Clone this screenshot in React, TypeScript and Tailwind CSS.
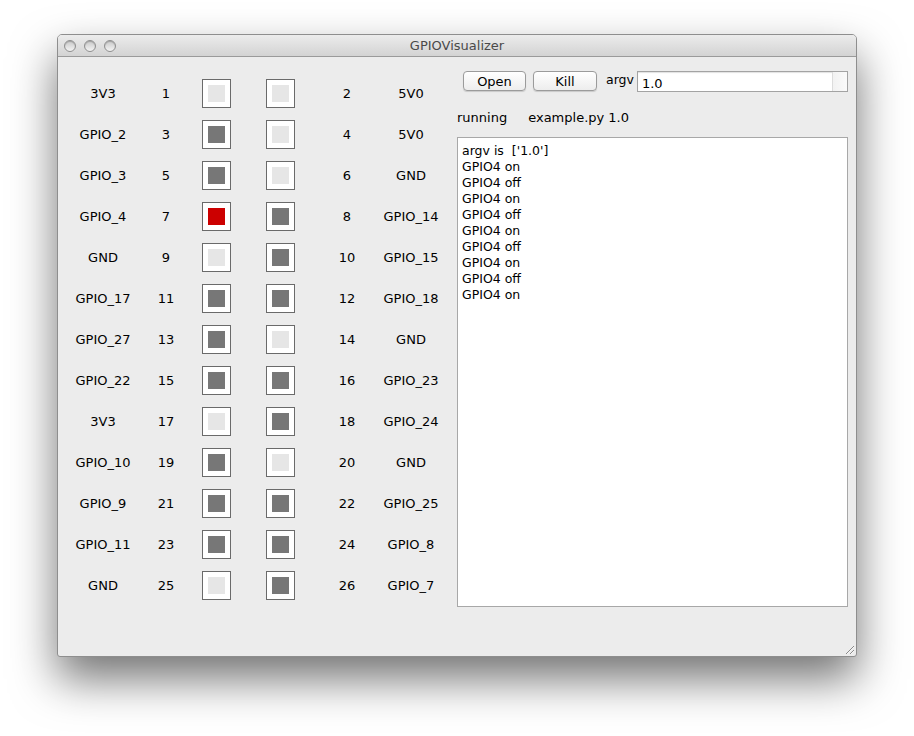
import React from 'react';

type PinState = 'off' | 'on' | 'hot';

interface PinRow {
  leftName: string;
  leftNum: number;
  leftState: PinState;
  rightState: PinState;
  rightNum: number;
  rightName: string;
}

const pins: PinRow[] = [
  { leftName: '3V3', leftNum: 1, leftState: 'off', rightState: 'off', rightNum: 2, rightName: '5V0' },
  { leftName: 'GPIO_2', leftNum: 3, leftState: 'on', rightState: 'off', rightNum: 4, rightName: '5V0' },
  { leftName: 'GPIO_3', leftNum: 5, leftState: 'on', rightState: 'off', rightNum: 6, rightName: 'GND' },
  { leftName: 'GPIO_4', leftNum: 7, leftState: 'hot', rightState: 'on', rightNum: 8, rightName: 'GPIO_14' },
  { leftName: 'GND', leftNum: 9, leftState: 'off', rightState: 'on', rightNum: 10, rightName: 'GPIO_15' },
  { leftName: 'GPIO_17', leftNum: 11, leftState: 'on', rightState: 'on', rightNum: 12, rightName: 'GPIO_18' },
  { leftName: 'GPIO_27', leftNum: 13, leftState: 'on', rightState: 'off', rightNum: 14, rightName: 'GND' },
  { leftName: 'GPIO_22', leftNum: 15, leftState: 'on', rightState: 'on', rightNum: 16, rightName: 'GPIO_23' },
  { leftName: '3V3', leftNum: 17, leftState: 'off', rightState: 'on', rightNum: 18, rightName: 'GPIO_24' },
  { leftName: 'GPIO_10', leftNum: 19, leftState: 'on', rightState: 'off', rightNum: 20, rightName: 'GND' },
  { leftName: 'GPIO_9', leftNum: 21, leftState: 'on', rightState: 'on', rightNum: 22, rightName: 'GPIO_25' },
  { leftName: 'GPIO_11', leftNum: 23, leftState: 'on', rightState: 'on', rightNum: 24, rightName: 'GPIO_8' },
  { leftName: 'GND', leftNum: 25, leftState: 'off', rightState: 'on', rightNum: 26, rightName: 'GPIO_7' },
];

const log = [
  "argv is  ['1.0']",
  'GPIO4 on',
  'GPIO4 off',
  'GPIO4 on',
  'GPIO4 off',
  'GPIO4 on',
  'GPIO4 off',
  'GPIO4 on',
  'GPIO4 off',
  'GPIO4 on',
];

const PinBox: React.FC<{ state: PinState; className?: string }> = ({ state, className = '' }) => {
  const fill =
    state === 'hot' ? 'bg-[#cc0000]' : state === 'on' ? 'bg-[#777777]' : 'bg-[#e6e6e6]';
  return (
    <div className={`w-[29px] h-[29px] border border-[#6a6a6a] bg-white flex items-center justify-center ${className}`}>
      <div className={`w-[17px] h-[17px] ${fill}`} />
    </div>
  );
};

const MacButton: React.FC<{ label: string; width: string }> = ({ label, width }) => (
  <button
    className={`${width} h-[20px] rounded-[4px] border border-[#9b9b9b] bg-gradient-to-b from-white to-[#ededed] shadow-[0_1px_1px_rgba(0,0,0,0.15)] text-[13px] leading-none text-black`}
  >
    {label}
  </button>
);

export default function App() {
  return (
    <div
      className="w-[914px] h-[736px] bg-white pl-[57px] pt-[34px] overflow-hidden"
      style={{ fontFamily: '"Lucida Grande", "DejaVu Sans", sans-serif' }}
    >
      <div className="w-[800px] h-[623px] flex flex-col rounded-t-[5px] rounded-b-[3px] border border-[#8e8e8e] bg-[#ececec] shadow-[0_22px_45px_rgba(0,0,0,0.55)] overflow-hidden relative">
        {/* title bar */}
        <div className="h-[22px] shrink-0 flex items-center relative bg-gradient-to-b from-[#ececec] to-[#d3d3d3] border-b border-[#9a9a9a]">
          <div className="flex items-center gap-[8px] pl-[6px]">
            {[0, 1, 2].map((i) => (
              <div
                key={i}
                className="w-[12px] h-[12px] rounded-full border border-[#8f8f8f] bg-gradient-to-b from-[#c9c9c9] to-[#f4f4f4] shadow-[inset_0_1px_1px_rgba(0,0,0,0.2)]"
              />
            ))}
          </div>
          <div className="absolute inset-0 flex items-center justify-center text-[13px] text-[#4a4a4a] pointer-events-none">
            GPIOVisualizer
          </div>
        </div>

        {/* content */}
        <div className="flex flex-1">
          {/* pin header */}
          <div className="w-[399px] shrink-0 pt-[22px] flex flex-col gap-[12px] text-[13px] text-black">
            {pins.map((p) => (
              <div key={p.leftNum} className="flex items-center h-[29px]">
                <div className="w-[90px] text-center">{p.leftName}</div>
                <div className="w-[36px] text-center">{p.leftNum}</div>
                <PinBox state={p.leftState} className="ml-[18px]" />
                <PinBox state={p.rightState} className="ml-[35px]" />
                <div className="w-[36px] ml-[34px] text-center">{p.rightNum}</div>
                <div className="w-[92px] text-center">{p.rightName}</div>
              </div>
            ))}
          </div>

          {/* right panel */}
          <div className="flex-1 pr-[8px] pt-[13px] flex flex-col text-[13px] text-black">
            <div className="flex items-center h-[22px] pl-[6px]">
              <MacButton label="Open" width="w-[63px]" />
              <div className="ml-[7px]">
                <MacButton label="Kill" width="w-[64px]" />
              </div>
              <span className="ml-[9px] mr-[3px] -mt-[1px] text-[12.5px]">argv</span>
              <div className="flex-1 h-[21px] mt-[1px] flex border border-[#a3a3a3] bg-white shadow-[inset_0_1px_1px_rgba(0,0,0,0.12)]">
                <div className="flex-1 pl-[4px] pt-[4px] flex items-center leading-none">1.0</div>
                <div className="w-[15px] border-l border-[#dcdcdc] bg-gradient-to-r from-[#f2f2f2] to-[#fafafa]" />
              </div>
            </div>
            <div className="flex items-center h-[16px] mt-[18px] gap-[21px]">
              <span>running</span>
              <span>example.py 1.0</span>
            </div>
            <div className="mt-[11px] h-[470px] border border-[#a8a8a8] bg-white pl-[4px] pt-[5px] leading-[16px] text-[12.5px]">
              {log.map((l, i) => (
                <div key={i} className="whitespace-pre">{l}</div>
              ))}
            </div>
          </div>
        </div>

        {/* resize grip */}
        <svg className="absolute right-[1px] bottom-[1px]" width="11" height="11" viewBox="0 0 11 11">
          <line x1="2" y1="10" x2="10" y2="2" stroke="#8a8a8a" strokeWidth="1" />
          <line x1="6" y1="10" x2="10" y2="6" stroke="#8a8a8a" strokeWidth="1" />
          <line x1="3" y1="10" x2="10" y2="3" stroke="#ffffff" strokeWidth="0.6" />
          <line x1="7" y1="10" x2="10" y2="7" stroke="#ffffff" strokeWidth="0.6" />
        </svg>
      </div>
    </div>
  );
}
